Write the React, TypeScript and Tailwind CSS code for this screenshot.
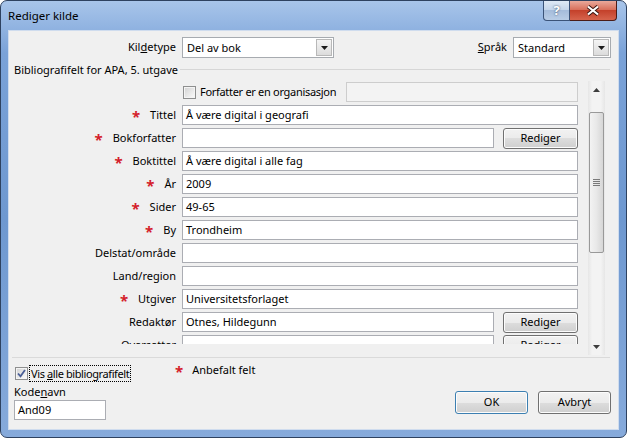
// Rediger kilde – Windows 7 style dialog

const fields = [
  { label: "Tittel", req: true, value: "Å være digital i geografi" },
  { label: "Bokforfatter", req: true, value: "", edit: true },
  { label: "Boktittel", req: true, value: "Å være digital i alle fag" },
  { label: "År", req: true, value: "2009" },
  { label: "Sider", req: true, value: "49-65" },
  { label: "By", req: true, value: "Trondheim" },
  { label: "Delstat/område", req: false, value: "" },
  { label: "Land/region", req: false, value: "" },
  { label: "Utgiver", req: true, value: "Universitetsforlaget" },
  { label: "Redaktør", req: false, value: "Otnes, Hildegunn", edit: true },
  { label: "Oversetter", req: false, value: "", edit: true },
];

function Star() {
  return <span className="pt-[3px] text-[15px] font-bold leading-[15px] text-[#d4202a]">*</span>;
}

function Button({ label, className }: { label: string; className: string }) {
  return (
    <div
      className={`flex items-center justify-center rounded-[3px] border bg-[linear-gradient(#f2f2f2_0%,#ebebeb_50%,#dddddd_50%,#cfcfcf_100%)] shadow-[inset_0_0_0_1px_#fcfcfc] ${className}`}
    >
      {label}
    </div>
  );
}

function Combo({ value, className }: { value: string; className: string }) {
  return (
    <div className={`flex h-[21px] border border-[#a7abb0] bg-white ${className}`}>
      <div className="flex-1 pl-[4px] leading-[19px]">{value}</div>
      <div className="m-[1px] flex w-[16px] items-center justify-center border border-[#b8b8b8] bg-[linear-gradient(#f4f4f4,#dcdcdc)]">
        <svg width="7" height="4" viewBox="0 0 7 4">
          <path d="M0 0h7L3.5 4z" fill="#1a1a1a" />
        </svg>
      </div>
    </div>
  );
}

function Checkbox({ checked }: { checked?: boolean }) {
  return (
    <div className="flex h-[13px] w-[13px] shrink-0 items-center justify-center border border-[#8e8f8f] bg-white">
      <div className="flex h-[11px] w-[11px] items-center justify-center border border-[#f4f4f4] bg-[linear-gradient(135deg,#d5d5d5,#f8f8f8)]">
        {checked && (
          <svg width="9" height="9" viewBox="0 0 9 9">
            <path d="M1 4.5l2.5 2.8L8 1" stroke="#4a5f97" strokeWidth="1.8" fill="none" />
          </svg>
        )}
      </div>
    </div>
  );
}

function ScrollBar() {
  return (
    <div className="flex h-[274px] w-[17px] flex-col items-center bg-[linear-gradient(90deg,#e6e6e6,#f3f3f3_25%,#f3f3f3_75%,#e6e6e6)]">
      <div className="flex h-[17px] w-full items-center justify-center">
        <svg width="7" height="4" viewBox="0 0 7 4">
          <path d="M0 4h7L3.5 0z" fill="#3d3d3d" />
        </svg>
      </div>
      <div className="mt-[14px] flex h-[141px] w-[15px] items-center justify-center rounded-[2px] border border-[#999] bg-[linear-gradient(90deg,#f3f3f3,#e8e8e8_50%,#d6d6d6)]">
        <svg width="7" height="7" viewBox="0 0 7 7">
          <path d="M0 0.5h7M0 2.5h7M0 4.5h7M0 6.5h7" stroke="#7a7a7a" strokeWidth="1" />
        </svg>
      </div>
      <div className="flex-1" />
      <div className="flex h-[17px] w-full items-center justify-center">
        <svg width="7" height="4" viewBox="0 0 7 4">
          <path d="M0 0h7L3.5 4z" fill="#3d3d3d" />
        </svg>
      </div>
    </div>
  );
}

export default function App() {
  return (
    <div className="h-[438px] w-[627px] bg-white font-['Noto_Sans',sans-serif] text-[11px] text-black">
      <div className="flex h-full w-full flex-col overflow-hidden rounded-[7px] border border-[#2e4260] bg-[linear-gradient(180deg,#a8c5ea_0%,#7aa2d8_12%,#6e98d0_50%,#86aadb_100%)]">
        {/* title bar */}
        <div className="flex h-[29px] items-start">
          <div className="ml-[7px] mt-[7px] text-[11.5px] leading-[16px] text-black">Rediger kilde</div>
          <div className="ml-auto mr-[9px] flex">
            <div className="flex h-[20px] w-[27px] items-center justify-center rounded-bl-[4px] border border-t-0 border-[#3b5378] bg-[linear-gradient(#dfe9f5_0%,#c6d6ea_45%,#a5bcdb_50%,#b9cde6_100%)] text-[13px] font-bold text-white [text-shadow:0_0_2px_#2c3e58]">
              ?
            </div>
            <div className="flex h-[20px] w-[47px] items-center justify-center rounded-br-[4px] border border-l-0 border-t-0 border-[#4a1c18] bg-[linear-gradient(#e9a99b_0%,#d8705c_45%,#c4412b_50%,#d6644d_100%)]">
              <svg width="14" height="11" viewBox="0 0 14 11">
                <path d="M2 1.5l10 8M12 1.5l-10 8" stroke="#3b1510" strokeWidth="4" />
                <path d="M2 1.5l10 8M12 1.5l-10 8" stroke="#ffffff" strokeWidth="2.2" />
              </svg>
            </div>
          </div>
        </div>

        {/* client area */}
        <div className="mx-[7px] mb-[7px] flex flex-1 flex-col border border-[#cfdcee] bg-[#f0f0f0]">
          <div className="mt-[6px] flex h-[21px] items-center pr-[7px]">
            <div className="w-[167px] text-right">
              Kil<span className="underline">d</span>etype
            </div>
            <Combo value="Del av bok" className="ml-[6px] w-[152px]" />
            <div className="ml-auto">
              <span className="underline">S</span>pråk
            </div>
            <Combo value="Standard" className="ml-[6px] w-[98px]" />
          </div>

          <div className="ml-[5px] mr-[8px] mt-[5px] flex h-[13px] items-center">
            <span className="leading-[13px]">Bibliografifelt for APA, 5. utgave</span>
            <div className="ml-[2px] h-px flex-1 bg-[#d6d6d6]" />
          </div>

          <div className="ml-[5px] mr-[8px] mt-[5px] flex">
            <div className="flex h-[263px] w-[574px] flex-col gap-[3px] overflow-hidden pt-[1px]">
              <div className="flex h-[20px] shrink-0 items-center">
                <div className="w-[162px] shrink-0" />
                <div className="ml-[7px]">
                  <Checkbox />
                </div>
                <span className="ml-[4px] whitespace-nowrap tracking-[-0.3px]">Forfatter er en organisasjon</span>
                <div className="ml-auto mr-[10px] h-[20px] w-[232px] shrink-0 border border-[#cdcdcd] bg-[#f3f3f3]" />
              </div>
              {fields.map((f) => (
                <div key={f.label} className="flex h-[20px] shrink-0 items-center">
                  <div className="flex w-[162px] items-center justify-end gap-[10px]">
                    {f.req && <Star />}
                    <span>{f.label}</span>
                  </div>
                  {f.edit ? (
                    <>
                      <div className="ml-[6px] h-[20px] w-[312px] border border-[#abadb3] bg-white pl-[3px] leading-[18px]">
                        {f.value}
                      </div>
                      <Button label="Rediger" className="ml-[9px] h-[21px] w-[75px] border-[#707070]" />
                    </>
                  ) : (
                    <div className="ml-[6px] h-[20px] w-[396px] border border-[#abadb3] bg-white pl-[3px] leading-[18px]">
                      {f.value}
                    </div>
                  )}
                </div>
              ))}
            </div>
            <ScrollBar />
          </div>

          <div className="ml-[3px] mr-[8px] mt-[2px] h-px bg-[#dadada]" />

          <div className="mt-[4px] flex pl-[5px] pr-[7px]">
            <div className="flex w-[161px] flex-col">
              <div className="mt-[3px] flex h-[17px] items-center">
                <div className="ml-[1px]">
                  <Checkbox checked />
                </div>
                <div className="ml-[1px] whitespace-nowrap border border-dotted border-black pl-[1px] pr-[1px] leading-[15px] tracking-[-0.4px]">
                  Vis <span className="underline">a</span>lle bibliografifelt
                </div>
              </div>
              <div className="mt-[2px] leading-[15px]">
                Kode<span className="underline">n</span>avn
              </div>
              <div className="mt-[1px] h-[20px] w-[92px] border border-[#abadb3] bg-white pl-[3px] leading-[18px]">
                And09
              </div>
            </div>
            <div className="flex h-[15px] items-center gap-[9px]">
              <Star />
              <span className="leading-[15px]">Anbefalt felt</span>
            </div>
            <div className="ml-auto mt-[29px] flex gap-[10px]">
              <Button label="OK" className="h-[23px] w-[73px] border-[#3c7fb1] shadow-[inset_0_0_0_1px_#9fe3f7]" />
              <Button label="Avbryt" className="h-[23px] w-[73px] border-[#707070]" />
            </div>
          </div>
        </div>
      </div>
    </div>
  );
}
